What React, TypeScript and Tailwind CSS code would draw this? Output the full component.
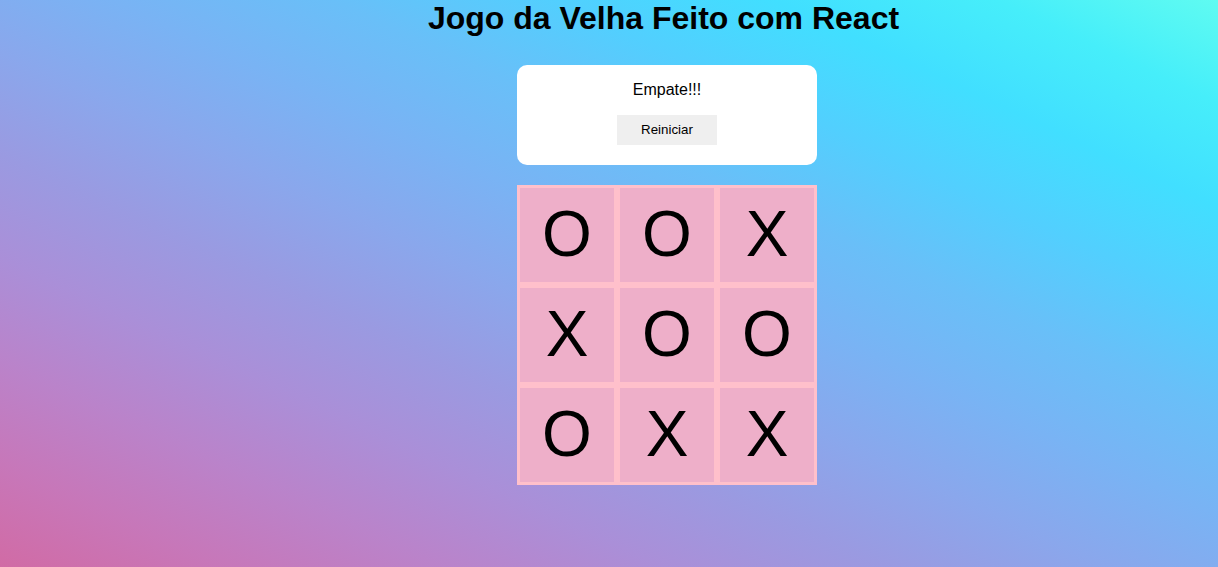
const board = ['O', 'O', 'X', 'X', 'O', 'O', 'O', 'X', 'X'];

export default function App() {
  return (
    <main className="min-h-screen h-[567px] w-full bg-[linear-gradient(to_right_top,#d16ba5,#c777b9,#ba83ca,#aa8fd8,#9a9ae1,#8aa7ec,#79b3f4,#69bff8,#52cffe,#41dfff,#46eefa,#5ffbf1)] font-['Liberation_Sans',Arial,sans-serif] text-black">
      <div className="flex flex-col items-center pl-[116px]">
        <h1 className="text-[32px] font-bold leading-[37px] pr-[7px] whitespace-nowrap">Jogo da Velha Feito com React</h1>

        <div className="mt-[28px] w-[300px] h-[100px] bg-white rounded-[10px] flex flex-col items-center pt-4">
          <p className="text-[16px] leading-[18px]">Empate!!!</p>
          <button className="mt-4 w-[100px] h-[30px] bg-[#efefef] text-[13.33px] text-black">Reiniciar</button>
        </div>

        <div className="mt-[20px] grid grid-cols-3 w-[300px]">
          {board.map((v, i) => (
            <div key={i} className="w-[100px] h-[100px] border-[3px] border-[#ffc0cb] bg-[#eeafc9] flex items-center justify-center text-[64px] leading-none pb-[2px]">
              {v}
            </div>
          ))}
        </div>
      </div>
    </main>
  );
}
